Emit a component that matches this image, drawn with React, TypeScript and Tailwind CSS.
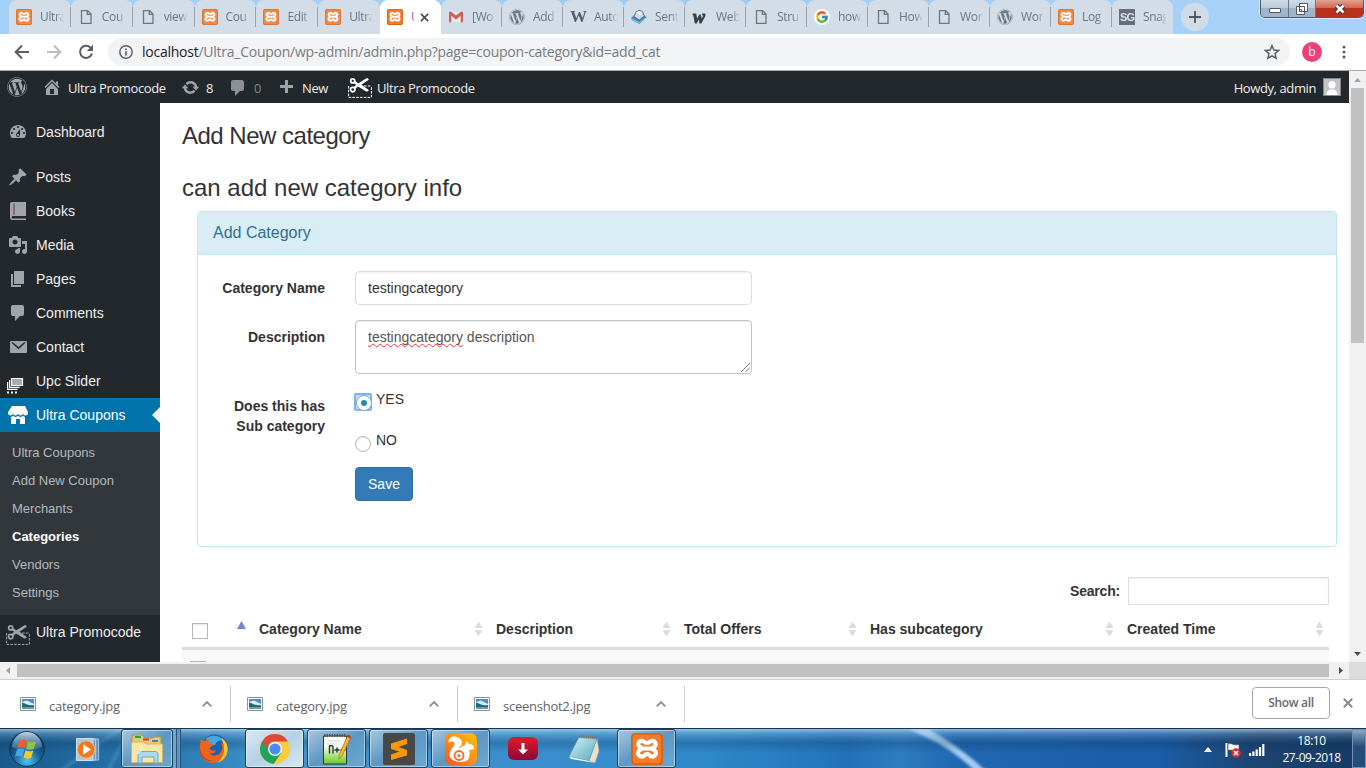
import React from "react";
import { FaWordpress } from "react-icons/fa";
import { FcGoogle } from "react-icons/fc";

const UI = "font-['Open_Sans','Noto_Sans',sans-serif]";

type P = { className?: string };

/* ---------- small drawings ---------- */

const Xampp = ({ className = "" }: P) => (
  <svg viewBox="0 0 32 32" className={className}>
    <rect width="32" height="32" rx="3.5" fill="#f47b2a" />
    <rect x="1" y="1" width="30" height="30" rx="3" fill="none" stroke="#c9570f" strokeWidth="1.2" />
    <g fill="none" stroke="#fff" strokeWidth="4.2" strokeLinecap="round" strokeLinejoin="round">
      <path d="M10.5 14.6a3.4 3.4 0 1 1 2.6-5.8c1.200 1.600 4.600 1.600 5.800 0a3.400 3.400 0 1 1 2.600 5.800" />
      <path d="M10.500 16.400a3.600 3.600 0 1 0 3 5.800c1-1.400 4-1.400 5 0a3.600 3.600 0 1 0 3-5.800" />
      <path d="M13 15.500h6" />
    </g>
  </svg>
);

const DocIcon = ({ className = "" }: P) => (
  <svg viewBox="0 0 16 16" className={className} fill="none" stroke="#5f6368" strokeWidth="1.300">
    <path d="M3.500 1.700h6.200l3.300 3.300v9.300H3.500zM9.300 1.700v3.700H13" />
  </svg>
);

const Gmail = () => (
  <svg viewBox="0 0 16 16" className="size-4">
    <path d="M2 3h12v10H2z" fill="#f1eff0" />
    <path d="M1 3.500v9.700h2.300V6.800L8 10.400l4.700-3.600v6.400H15V3.500c-.5-1.200-1.700-1.100-2.500-.5L8 6.600 3.500 3C2.700 2.400 1.500 2.300 1 3.500z" fill="#d04c43" />
  </svg>
);

const Cube = () => (
  <svg viewBox="0 0 16 16" className="size-4">
    <path d="M.3 8.500L3.500 6h9L15.700 8 8.500 15 .8 11z" fill="#2f7fb4" />
    <path d="M.8 9.500L8.300 13 15 8.500 8.500 14.800 1 11z" fill="#5fb8ea" />
    <path d="M2.800 7.500L5 3l3-2 3.500 1.500 1.800 4.500-5 4z" fill="#cdd8df" stroke="#39454d" strokeWidth=".8" />
    <path d="M5.500 3.500L8 2l3 1.300L8.500 6z" fill="#fff" />
  </svg>
);

const Glyph = ({ d, className = "size-5", box = 20 }: { d: string; className?: string; box?: number }) => (
  <svg viewBox={`0 0 ${box} ${box}`} className={`${className} shrink-0`} fill="currentColor">
    <path fillRule="evenodd" d={d} />
  </svg>
);

const D = {
  home: "M16 8.500l1.530 1.530-1.060 1.060L10 4.600l-6.470 6.490-1.060-1.060L10 2.500l4 4v-2h2v4zm-6-2.460l6 5.990V18H4v-5.970zM12 17v-5H8v5h4z",
  comment: "M5 2h9c1.100 0 2 .9 2 2v7c0 1.100-.9 2-2 2h-2l-5 5v-5H5c-1.100 0-2-.9-2-2V4c0-1.100.9-2 2-2z",
  plus: "M17 7v3h-5v5H9v-5H4V7h5V2h3v5h5z",
  update:
    "M10.200 3.280c3.530 0 6.430 2.610 6.920 6h2.080l-3.500 4-3.500-4h2.320c-.45-1.970-2.210-3.450-4.320-3.450-1.450 0-2.730.71-3.540 1.780L4.950 5.660C6.230 4.200 8.110 3.280 10.200 3.280zm-.4 13.440c-3.520 0-6.430-2.610-6.920-6H.8l3.500-4c1.170 1.330 2.330 2.670 3.500 4H5.480c.45 1.970 2.210 3.450 4.320 3.450 1.450 0 2.730-.71 3.540-1.780l1.710 1.950c-1.280 1.460-3.150 2.380-5.250 2.380z",
  dashboard:
    "M3.760 16h12.480c1.100-1.370 1.760-3.110 1.760-5 0-4.420-3.580-8-8-8s-8 3.580-8 8c0 1.890.66 3.630 1.760 5zM10 4c.55 0 1 .45 1 1s-.45 1-1 1-1-.45-1-1 .45-1 1-1zM6 6c.55 0 1 .45 1 1s-.45 1-1 1-1-.45-1-1 .45-1 1-1zm8 0c.55 0 1 .45 1 1s-.45 1-1 1-1-.45-1-1 .45-1 1-1zm-5.370 5.550L12 7v6c0 1.100-.9 2-2 2s-2-.9-2-2c0-.57.24-1.080.63-1.450zM4 10c.55 0 1 .45 1 1s-.45 1-1 1-1-.45-1-1 .45-1 1-1zm12 0c.55 0 1 .45 1 1s-.45 1-1 1-1-.45-1-1 .45-1 1-1zm-5 3c0-.55-.45-1-1-1s-1 .45-1 1 .45 1 1 1 1-.45 1-1z",
  pin: "M10.440 3.020l1.820-1.820 6.360 6.350-1.830 1.820c-1.050-.68-2.480-.57-3.410.36l-.75.75c-.92.93-1.040 2.350-.35 3.410l-1.830 1.820-2.410-2.410-2.800 2.790c-.42.42-3.380 2.710-3.800 2.290s1.860-3.390 2.280-3.810l2.790-2.790L4.100 9.360l1.830-1.820c1.050.69 2.480.57 3.400-.36l.75-.75c.93-.92 1.050-2.350.36-3.410z",
  media:
    "M13 11V4c0-.55-.45-1-1-1h-1.670L9 1H5L3.670 3H2c-.55 0-1 .45-1 1v7c0 .55.45 1 1 1h10c.55 0 1-.45 1-1zM7 4.500c1.380 0 2.500 1.120 2.500 2.500S8.380 9.500 7 9.500 4.500 8.380 4.500 7 5.620 4.500 7 4.500zM14 6h5v10.500c0 1.380-1.120 2.500-2.500 2.500S14 17.880 14 16.500s1.120-2.500 2.500-2.500c.17 0 .34.02.5.05V9h-3V6zm-4 8.050V13h2v3.500c0 1.380-1.120 2.500-2.500 2.500S7 17.880 7 16.500 8.120 14 9.500 14c.17 0 .34.02.5.05z",
  page: "M6 15V2h10v13H6zm-1 1h8v2H3V5h2v11z",
  store:
    "M1 10c.41.29.96.43 1.500.43.55 0 1.090-.14 1.500-.43.62-.46 1-1.170 1-2 0 .83.37 1.540 1 2 .41.29.96.43 1.500.43.55 0 1.090-.14 1.500-.43.62-.46 1-1.170 1-2 0 .83.37 1.540 1 2 .41.29.96.43 1.510.43.54 0 1.080-.14 1.490-.43.62-.46 1-1.170 1-2 0 .83.37 1.540 1 2 .41.29.96.43 1.500.43.55 0 1.090-.14 1.500-.43.63-.46 1-1.170 1-2V7l-3-6H4L0 7v1c0 .83.37 1.540 1 2zm2 8.990h5v-5h4v5h5v-7c-.37-.05-.72-.22-1-.43-.63-.45-1-.73-1-1.560 0 .83-.38 1.110-1 1.560-.41.3-.95.43-1.490.44-.55 0-1.100-.14-1.510-.44-.63-.45-1-.73-1-1.560 0 .83-.38 1.110-1 1.560-.41.3-.95.43-1.500.44-.54 0-1.090-.14-1.500-.44-.63-.45-1-.73-1-1.570 0 .84-.38 1.120-1 1.570-.29.21-.63.38-1 .44v6.990z",
  mail: "M3 4h15a1 1 0 0 1 1 1v10a1 1 0 0 1-1 1H3a1 1 0 0 1-1-1V5a1 1 0 0 1 1-1zm.5 1.800l7 6.400 7-6.400-1-.9-6 5-6-5z",
};

const Book = () => (
  <svg viewBox="0 0 20 20" className="size-5 shrink-0">
    <path d="M4 1h14v14H4.500c-1 0-1 2.600 0 2.600H18V19H4.500A2.500 2.500 0 0 1 2 16.500V3a2 2 0 0 1 2-2z" fill="#a0a5aa" />
    <path d="M5.500 2.500h1.100v11H5.500z" fill="#7b2d7c" />
  </svg>
);

const Scissors = ({ className = "" }: P) => (
  <svg viewBox="0 0 24 20" className={`${className} shrink-0`} fill="none" stroke="currentColor">
    <circle cx="4.700" cy="2.900" r="2" strokeWidth="1.700" />
    <circle cx="4.700" cy="11.600" r="2.200" strokeWidth="1.700" />
    <path d="M6.500 4l3.500 2.800L6.500 10M9 7h3" strokeWidth="2.400" />
    <path d="M10 5.500L18.500.3c1.300-.3 2 .5 2.300 1.500L13.500 6.800l7.300 5.200c-.5 1.200-1.400 1.700-2.600 1.400L10 8.500z" fill="currentColor" stroke="none" />
    <path d="M.6 8v11.400h22.800V8.500M16 8h7.500" strokeWidth="1" strokeDasharray="2.600 1.200" />
  </svg>
);

const Slider = () => (
  <svg viewBox="0 0 20 20" className="size-5 shrink-0">
    <g fill="none" stroke="#fff" strokeWidth="1.200">
      <path d="M.6 7v7.400h10M2.600 5v7.400h10" />
    </g>
    <path d="M4.500 3.500h11v7h-11z" fill="#aaa" stroke="#fff" strokeWidth="1.200" />
    <path d="M0 16.500h2v2H0zM4 16.500h2v2H4zM8 16.500h2v2H8z" fill="#fff" />
  </svg>
);

/* ---------- browser chrome ---------- */

const xa = <Xampp className="size-4" />;
const doc = <DocIcon className="size-4" />;
const wp = <FaWordpress className="size-4 text-[#5b666e]" />;

const leftTabs: [React.ReactNode, string][] = [
  [xa, "Ultra"], [doc, "Cou"], [doc, "view"], [xa, "Cou"], [xa, "Edit"], [xa, "Ultra"],
];
const rightTabs: [React.ReactNode, string][] = [
  [<Gmail />, "[Wo"],
  [wp, "Add"],
  [<span className="block font-['Liberation_Serif',serif] text-[17px] font-bold leading-4 text-[#3e464c]">W</span>, "Auto"],
  [<Cube />, "Sent"],
  [<span className="block pl-px font-['Liberation_Serif',serif] text-[18px] font-black italic leading-4 text-[#1c242b] [-webkit-text-stroke:1px_#1c242b]">w</span>, "Web"],
  [doc, "Stru"],
  [<span className="grid size-4 place-items-center rounded-full bg-white"><FcGoogle className="size-3.5" /></span>, "how"],
  [doc, "How"],
  [doc, "Wor"],
  [wp, "Wor"],
  [xa, "Log"],
  [<span className="block size-4 bg-[#555868] text-center font-['Liberation_Sans',sans-serif] text-[11px] font-bold leading-4 tracking-[-0.8px] text-[#d4e7ee]">SG</span>, "Snag"],
];

const Tab = ({ icon, text, side, last }: { icon: React.ReactNode; text: string; side: "l" | "r"; last?: boolean }) => (
  <div className={`flex h-[34px] items-center rounded-t-[8px] bg-[#d3dde8] ${side === "l" ? "w-[61.85px]" : "w-[61px]"}`}>
    <div className={`flex h-5 flex-1 items-center pl-[7px] ${last ? "" : "border-r border-[#98a2ac]"}`}>
      <span className="w-4 shrink-0 opacity-85">{icon}</span>
      <span className="ml-2 w-[24px] overflow-hidden whitespace-nowrap text-[12px] leading-5 tracking-[-0.35px] text-[#6d747c] [mask-image:linear-gradient(to_right,black_65%,transparent)]">{text}</span>
    </div>
  </div>
);

const WindowControls = () => (
  <div className="absolute right-[2px] top-0 flex h-[18px] overflow-hidden rounded-b-[5px] border border-t-0 border-[#4c5a69] shadow-[0_0_1px_1px_rgba(255,255,255,.5)]">
    <div className="grid w-[28px] place-items-center border-r border-[#66788a] bg-linear-to-b from-[#d0dce8] via-[#bccbda] via-45% to-[#9fb5ca] to-50%">
      <div className="mt-1 h-[5px] w-[12px] rounded-[1px] border border-[#535666] bg-white" />
    </div>
    <div className="grid w-[27px] place-items-center border-r border-[#66788a] bg-linear-to-b from-[#d0dce8] via-[#bccbda] via-45% to-[#9fb5ca] to-50%">
      <svg viewBox="0 0 12 12" className="size-3" fill="#fff" stroke="#535666">
        <path d="M3.500.5h8v8h-8zM.5 3.500h8v8h-8zM3.500 6.500h2v2h-2z" />
      </svg>
    </div>
    <div className="grid w-[47px] place-items-center bg-linear-to-b from-[#e2a191] via-[#cf6a52] via-45% to-[#b8311a] to-50%">
      <svg viewBox="0 0 12 12" className="size-3">
        <path d="M2.500 2.500l7 7M9.500 2.500l-7 7" stroke="#4b2f38" strokeWidth="4.600" />
        <path d="M2.500 2.500l7 7M9.500 2.500l-7 7" stroke="#fff" strokeWidth="2.600" />
      </svg>
    </div>
  </div>
);

const TabStrip = () => (
  <div className={`${UI} relative flex h-[34px] shrink-0 bg-linear-to-r from-[#a3d1f8] via-[#9dcbf0] to-[#a9d2fa] pl-[9px]`}>
    {leftTabs.map(([i, t], k) => <Tab key={k} icon={i} text={t} side="l" last={k === 5} />)}
    <div className="flex w-[61px] items-center rounded-t-[8px] bg-white pl-[7px]">
      <Xampp className="size-4 shrink-0" />
      <span className="ml-2 w-[3px] overflow-hidden text-[12px] text-[#a855a0]">U</span>
      <svg viewBox="0 0 10 10" className="ml-[6px] size-[9px]"><path d="M1 1l8 8M9 1L1 9" stroke="#45494d" strokeWidth="1.700" /></svg>
    </div>
    {rightTabs.map(([i, t], k) => <Tab key={k} icon={i} text={t} side="r" last={k === 11} />)}
    <div className="ml-2 mt-[3px] grid size-7 place-items-center rounded-full bg-[#cfdce8]">
      <svg viewBox="0 0 12 12" className="size-3"><path d="M6 0v12M0 6h12" stroke="#50565c" strokeWidth="1.800" /></svg>
    </div>
    <WindowControls />
  </div>
);

const Toolbar = () => (
  <div className={`${UI} flex h-[37px] shrink-0 items-center border-b border-[#a9aaab] bg-white pl-[14px]`}>
    <svg viewBox="0 0 16 16" className="size-4" fill="none" stroke="#5a5e63" strokeWidth="2"><path d="M15 8H2M8 1.500L1.700 8 8 14.500" /></svg>
    <svg viewBox="0 0 16 16" className="ml-4 size-4" fill="none" stroke="#bbbdbf" strokeWidth="2"><path d="M1 8h13M8 1.500L14.300 8 8 14.500" /></svg>
    <svg viewBox="0 0 16 16" className="ml-4 size-4"><path d="M13.300 4.500A6.100 6.100 0 1 0 14 9.500" fill="none" stroke="#5a5e63" strokeWidth="2" /><path d="M15 .8v6.200H8.800z" fill="#5a5e63" /></svg>
    <div className="ml-[14px] flex h-7 w-[1182px] items-center rounded-full bg-[#f1f3f4] pl-[11px] pr-[10px]">
      <svg viewBox="0 0 14 14" className="size-[14px]" fill="none" stroke="#5a5e63" strokeWidth="1.400"><circle cx="7" cy="7" r="6.200" /><path d="M7 6.200v4.200M7 3.600v1.400" strokeWidth="1.600" /></svg>
      <span className="ml-[9px] flex-1 whitespace-nowrap text-[14px] leading-5 tracking-[-0.25px] text-[#777c81]">
        <span className="text-[#202124]">localhost</span>/Ultra_Coupon/wp-admin/admin.php?page=coupon-category&amp;id=add_cat
      </span>
      <svg viewBox="0 0 16 16" className="size-4" fill="none" stroke="#5a5e63" strokeWidth="1.500"><path d="M8 1.800l1.900 4.300 4.700.4-3.600 3.100 1.100 4.600L8 11.800l-4.100 2.400L5 9.600 1.400 6.500l4.700-.4z" /></svg>
    </div>
    <div className="ml-3 grid size-5 place-items-center rounded-full bg-[#ec407a] text-[12px] leading-none text-white">b</div>
    <svg viewBox="0 0 4 14" className="ml-[20px] h-[14px] w-1" fill="#5a5e63"><circle cx="2" cy="2" r="1.500" /><circle cx="2" cy="7" r="1.500" /><circle cx="2" cy="12" r="1.500" /></svg>
  </div>
);

/* ---------- WordPress admin ---------- */

const AdminBar = () => (
  <div className={`${UI} flex h-8 shrink-0 items-center bg-[#23282d] text-[13px] leading-5 tracking-[-0.38px] text-[#eee]`}>
    <FaWordpress className="ml-[7px] size-5 text-[#a0a5aa]" />
    <Glyph d={D.home} className="ml-[15px] size-5 text-[#a0a5aa]" />
    <span className="ml-[6px] w-[113px] whitespace-nowrap pt-0.5">Ultra Promocode</span>
    <Glyph d={D.update} className="size-[19px] text-[#a0a5aa]" />
    <span className="ml-[6px] w-[22px] pt-0.5">8</span>
    <Glyph d={D.comment} className="mt-px size-5 text-[#8b9095]" />
    <span className="ml-[6px] w-[22px] pt-0.5 text-[#82878c]">0</span>
    <Glyph d={D.plus} className="mt-0.5 size-5 text-[#a0a5aa]" />
    <span className="ml-[6px] w-[46px] pt-0.5">New</span>
    <Scissors className="mt-0.5 h-5 w-6 text-white" />
    <span className="ml-[5px] flex-1 pt-0.5">Ultra Promocode</span>
    <span className="pt-0.5 tracking-[-0.4px]">Howdy, admin</span>
    <span className="ml-[7px] mr-2 grid size-[18px] place-items-center border border-[#82878c] bg-[#c5c5c5]">
      <svg viewBox="0 0 16 16" className="size-4" fill="#fff"><circle cx="8" cy="5.800" r="3.600" /><path d="M2.500 16c0-4 2.500-5 4-5.500h3c1.500.5 4 1.500 4 5.500z" /></svg>
    </span>
  </div>
);

const Item = ({ icon, label, active }: { icon: React.ReactNode; label: string; active?: boolean }) => (
  <div className={`flex h-[34px] items-center pl-2 text-[14px] ${active ? "bg-[#0073aa] text-white" : "text-[#eee]"}`}>
    <span className={`w-[28px] ${active ? "text-white" : "text-[#a0a5aa]"}`}>{icon}</span>
    <span className="flex-1 whitespace-nowrap">{label}</span>
    {active && <span className="border-8 border-transparent border-r-[#f1f1f1]" />}
  </div>
);

const Sidebar = () => (
  <div className="w-40 shrink-0 overflow-hidden bg-[#23282d] pt-3 font-['Liberation_Sans',sans-serif]">
    <Item icon={<Glyph d={D.dashboard} />} label="Dashboard" />
    <div className="h-[11px]" />
    <Item icon={<Glyph d={D.pin} />} label="Posts" />
    <Item icon={<Book />} label="Books" />
    <Item icon={<Glyph d={D.media} />} label="Media" />
    <Item icon={<Glyph d={D.page} />} label="Pages" />
    <Item icon={<Glyph d={D.comment} />} label="Comments" />
    <Item icon={<Glyph d={D.mail} />} label="Contact" />
    <Item icon={<div className="-ml-px pt-2"><Slider /></div>} label="Upc Slider" />
    <Item icon={<Glyph d={D.store} />} label="Ultra Coupons" active />
    <div className="h-[183px] bg-[#32373c] pl-3 pt-[7px] text-[13px] leading-[28px] text-[#b4b9be]">
      <div>Ultra Coupons</div>
      <div>Add New Coupon</div>
      <div>Merchants</div>
      <div className="font-bold text-white">Categories</div>
      <div>Vendors</div>
      <div>Settings</div>
    </div>
    <Item icon={<div className="-ml-[2px] pt-[5px]"><Scissors className="h-5 w-6" /></div>} label="Ultra Promocode" />
  </div>
);

const SortBoth = () => (
  <svg viewBox="0 0 9 16" className="h-4 w-[9px]" fill="#dcdcdc"><path d="M4.500 0.500L8.500 7H.5zM4.500 15.500L8.500 9H.5z" /></svg>
);

const Th = ({ label, w }: { label: string; w: string }) => (
  <div className={`flex items-center justify-between pt-0.5 ${w}`}>
    <span>{label}</span>
    <SortBoth />
  </div>
);

const CategoryPanel = () => (
  <div className="mx-[15px] h-[336px] w-[1140px] rounded-[4px] border border-[#bce8f1]">
    <div className="h-[43px] border-b border-[#bce8f1] bg-[#d9edf7] pl-[15px] text-[16px] leading-[42px] text-[#31708f]">Add Category</div>
    <div className="grid grid-cols-[127px_397px] gap-x-[30px] pt-4">
      <label className="text-right font-bold leading-[34px]">Category Name</label>
      <div className="h-[34px] rounded-[4px] border border-[#ddd] pl-3 leading-8 shadow-[inset_0_1px_2px_rgba(0,0,0,.07)]">testingcategory</div>

      <label className="pt-[15px] text-right font-bold leading-[34px]">Description</label>
      <div className="mt-[15px] flex h-[54px] items-end justify-between rounded-[4px] border border-[#c4c4c4] pl-3 text-[#555] shadow-[inset_0_1px_1px_rgba(0,0,0,.075)]">
        <div className="self-start leading-8">
          <span className="underline decoration-[#e33] decoration-wavy decoration-[0.500px] underline-offset-[1px] [text-decoration-skip-ink:none]">testingcategory</span> description
        </div>
        <svg viewBox="0 0 10 10" className="m-px size-[9px]" stroke="#666" strokeWidth="1"><path d="M0 10L10 0M5 10l5-5" /></svg>
      </div>

      <div className="pt-[22px] text-right font-bold leading-5">Does this has<br />Sub category</div>
      <div className="pt-[15px]">
        <div className="flex h-[41px] gap-1">
          <span className="-ml-px mt-1 grid size-[18px] place-items-center rounded-[2px] border-2 border-[#7fb0f5] bg-[#c9defa]">
            <span className="grid size-4 place-items-center rounded-full border border-[#88a8cc] bg-white"><span className="size-1.5 rounded-full bg-[#1e8cbe]" /></span>
          </span>
          <span className="leading-5">YES</span>
        </div>
        <div className="flex h-[37px] gap-[5px]">
          <span className="mt-[6px] size-4 rounded-full border border-[#b4b9be] shadow-[inset_0_1px_2px_rgba(0,0,0,.1)]" />
          <span className="leading-5">NO</span>
        </div>
        <div className="h-[34px] w-[58px] rounded-[4px] border border-[#2e6da4] bg-[#337ab7] text-center leading-8 text-white">Save</div>
      </div>
    </div>
  </div>
);

const Main = () => (
  <div className="flex-1 overflow-hidden bg-white pl-[22px] font-['Liberation_Sans',sans-serif] text-[14px] text-[#333]">
    <h1 className="pt-[19px] text-[24px] leading-[28px] tracking-[-0.5px]">Add New category</h1>
    <h1 className="pb-[9px] pt-6 text-[24px] leading-[28px]">can add new category info</h1>
    <CategoryPanel />
    <div className="mr-5 mt-[30px] flex h-7 items-center justify-end font-bold">
      <span className="tracking-[-0.2px]">Search:</span>
      <div className="ml-2 h-7 w-[201px] border border-[#ddd] shadow-[inset_0_1px_2px_rgba(0,0,0,.07)]" />
    </div>
    <div className="mr-5 mt-1 flex h-[41px] items-center border-b-3 border-[#ddd] pl-[10px] font-bold">
      <span className="mt-[6px] size-4 border border-[#b4b9be] shadow-[inset_0_1px_2px_rgba(0,0,0,.1)]" />
      <svg viewBox="0 0 9 8" className="-mt-[6px] ml-[29px] mr-[13px] h-2 w-[9px]" fill="#7d7ddb"><path d="M4.500 0L9 8H0z" /></svg>
      <div className="flex gap-[13px]">
        <Th label="Category Name" w="w-[224px]" />
        <Th label="Description" w="w-[175px]" />
        <Th label="Total Offers" w="w-[173px]" />
        <Th label="Has subcategory" w="w-[244px]" />
        <Th label="Created Time" w="w-[197px]" />
      </div>
    </div>
    <div className="mr-5 h-3 bg-[#f9f9f9] pl-2 pt-[11px]"><div className="h-4 w-4 border border-[#b4b9be]" /></div>
  </div>
);

const Arrow = ({ d, c }: { d: string; c: string }) => (
  <svg viewBox="0 0 17 17" className="size-[17px] shrink-0" fill={c}><path d={d} /></svg>
);

const VScroll = () => (
  <div className="flex w-[17px] shrink-0 flex-col items-center justify-between bg-[#f1f1f1]">
    <div>
      <Arrow d="M5 11h7L8.500 7z" c="#a3a3a3" />
      <div className="mx-auto h-[255px] w-[13px] bg-[#c1c1c1]" />
    </div>
    <Arrow d="M5 7h7L8.500 11z" c="#505050" />
  </div>
);

const HScroll = () => (
  <div className="flex h-[17px] shrink-0 items-center bg-[#f1f1f1]">
    <Arrow d="M10 5v7L6 8.500z" c="#a3a3a3" />
    <div className="h-[13px] w-[1312px] bg-[#c1c1c1]" />
    <div className="ml-auto"><Arrow d="M7 5v7l4-3.500z" c="#505050" /></div>
    <div className="h-full w-[17px] bg-[#dcdcdc]" />
  </div>
);

/* ---------- download shelf ---------- */

const Download = ({ name }: { name: string }) => (
  <div className="flex h-9 w-[227px] items-center border-r border-[#ccc] pl-[16px] pr-[18px]">
    <svg viewBox="0 0 16 14" className="h-[14px] w-4">
      <path d="M.5.5h15v13H.5z" fill="#fff" stroke="#909090" />
      <path d="M2 2h12v5H2z" fill="#4f8fc9" /><path d="M2 5l5-1.500L14 7v2H2z" fill="#dcecf5" /><path d="M2 5.500c4 1 6 3.500 12 2.500v4H2z" fill="#256a68" /><path d="M2 10h12v2H2z" fill="#5c9fc4" />
    </svg>
    <span className="ml-[13px] flex-1 pt-[5px] text-[13px] tracking-[-0.25px] text-[#5f6368]">{name}</span>
    <svg viewBox="0 0 10 6" className="h-[6px] w-[10px]" fill="none" stroke="#8c8f93" strokeWidth="1.800"><path d="M.7 5.300L5 1l4.300 4.300" /></svg>
  </div>
);

const Shelf = () => (
  <div className={`${UI} flex h-[49px] shrink-0 items-center border-t border-[#d0d0d0] bg-white pl-[4px]`}>
    <Download name="category.jpg" />
    <Download name="category.jpg" />
    <Download name="sceenshot2.jpg" />
    <div className="-mt-0.5 ml-auto grid h-8 w-[78px] place-items-center rounded-[4px] border border-[#a5a7aa] text-[12px] font-semibold tracking-[-0.3px] text-[#666a6f]">Show all</div>
    <svg viewBox="0 0 10 10" className="-mt-0.5 ml-[13px] mr-[13px] size-[10px]"><path d="M.8.8l8.400 8.400M9.200.8L.8 9.200" stroke="#888b8f" strokeWidth="2" /></svg>
  </div>
);

/* ---------- taskbar ---------- */

const Orb = () => (
  <svg viewBox="0 0 36 36" className="size-9">
    <defs>
      <radialGradient id="orb" cx=".5" cy=".85" r=".8"><stop offset="0" stopColor="#49c7f0" /><stop offset=".5" stopColor="#1b5f97" /><stop offset="1" stopColor="#0b2e52" /></radialGradient>
      <linearGradient id="orbTop" x2="0" y2="1"><stop offset="0" stopColor="#d8eaf6" stopOpacity=".9" /><stop offset="1" stopColor="#7fb0d2" stopOpacity=".25" /></linearGradient>
    </defs>
    <circle cx="18" cy="18" r="17.300" fill="url(#orb)" stroke="#0d3557" />
    <path d="M3 16a15 15 0 0 1 30 0c-7 4-22 4-30 0z" fill="url(#orbTop)" />
    <path d="M10.500 9.500c3-1.800 5.200-1.300 7.300 0l-2 7.500c-2.200-1.400-4.500-1.600-7.300 0z" fill="#f0612a" />
    <path d="M19 10.200c2.600 1.300 5 1.400 8 0l-2.200 7.500c-2.800 1.300-5.200 1.300-7.700-.1z" fill="#8fc43f" />
    <path d="M8 18.600c2.800-1.600 5-1.300 7.200 0l-2 7.200c-2.200-1.400-4.500-1.500-7.200 0z" fill="#4fa3e0" />
    <path d="M16.600 19.300c2.600 1.400 5 1.400 7.700.1l-2.100 7.300c-2.800 1.300-5.200 1.300-7.700-.1z" fill="#fbc72e" />
  </svg>
);

const MediaPlayer = () => (
  <svg viewBox="0 0 28 26" className="h-[25px] w-7">
    <path d="M7 2h17v22H7z" fill="#5b93c0" stroke="#9fc6e2" /><path d="M4 2h17v22H4z" fill="#6ca3cd" stroke="#b5d5eb" /><path d="M1 1.500h17v23H1z" fill="#a9cbe4" stroke="#d0e4f1" />
    <circle cx="11" cy="13" r="9" fill="#f07a1b" stroke="#f9b06b" /><path d="M8 7.500v11l8-5.500z" fill="#fff" />
  </svg>
);

const Explorer = () => (
  <svg viewBox="0 0 34 30" className="h-[30px] w-[34px]">
    <path d="M2 3l1-2h10l1 3h9l1-1h7v25H2z" fill="#e4c878" stroke="#b8963f" />
    <path d="M5 2h6v2H5z" fill="#2da03c" /><path d="M13 4.500h6v2h-6z" fill="#d04030" /><path d="M22 6h6v2h-6z" fill="#3b86d0" />
    <path d="M1.500 8h12l2 2h17v18.500h-31z" fill="#f7e6a6" stroke="#d3b65f" />
    <path d="M8 29v-9c0-1.500 1-2.500 2.500-2.500h15c1.500 0 2.500 1 2.500 2.500v9h-4v-6H12v6z" fill="#a9d8f0" stroke="#6ba8ce" />
    <path d="M12 11l-1 6-4 3" stroke="#fff" fill="none" />
  </svg>
);

const Firefox = () => (
  <svg viewBox="0 0 32 32" className="size-[31px]">
    <circle cx="17" cy="15" r="13.500" fill="#1f5fae" /><path d="M8 6c4-4 14-5 19 2-4-1-8 0-9 4l-6 2z" fill="#3fa9e0" />
    <path d="M3 6c1 1.500 2.500 2 4.500 2C10 5.500 12 6 12 6c-1 1.200-1.500 2.500-1 4 2 .2 4 .8 5 1.800-1 2-3.500 2-4 4 1 2.500 4 3 7 2-1 3-5 4-7 3.500 5 4.500 13 1 13-6 0-3-1-5-2-6 3 1.500 4 3.500 4.500 5.500.3-4-1-7.500-4-10C29 8 31 12 30.500 17 30 25.500 24 31 16 31 7.500 31 1.500 24.500 1.500 16.500 1.500 12.500 3 10 3 6z" fill="#e8651b" />
    <path d="M24 5c5 3.500 7 8 6.500 12.500C30 24 26 29 20 30.500c6-4.500 8-10 6.500-18z" fill="#fbc531" /><path d="M2 14c0 8 5 14 13 15-7 1-13.500-5-13.500-12z" fill="#c43a17" />
  </svg>
);

const Chrome = () => (
  <svg viewBox="0 0 30 30" className="size-[30px]">
    <circle cx="15" cy="15" r="15" fill="#fbcd3a" />
    <path d="M15 15L2 7.500A15 15 0 0 0 13.500 29.900L21.500 18.700z" fill="#21a35a" />
    <path d="M2 7.500l6.500 11.200L15 15z" fill="#21a35a" />
    <path d="M2 7.500A15 15 0 0 1 28 7.500H15c-3.500 0-6 2-7 4.800L8 15z" fill="#dc4a3d" />
    <circle cx="15" cy="15" r="7" fill="#f3f6fb" /><circle cx="15" cy="15" r="5.600" fill="#4c8bf5" />
  </svg>
);

const Npp = () => (
  <svg viewBox="0 0 30 32" className="h-8 w-[30px]">
    <defs><linearGradient id="npp" x2="0" y2="1"><stop offset=".35" stopColor="#fafcf5" /><stop offset="1" stopColor="#67cb24" /></linearGradient></defs>
    <path d="M1.500 3h23v28h-23z" fill="url(#npp)" stroke="#2b3a2b" /><path d="M2 2.500h22" stroke="#555" strokeWidth="3" strokeDasharray="1.500 1" />
    <path d="M5 8h13M5 11h10" stroke="#bdd" />
    <path d="M7.500 20.500v-8M7.500 12.700h2.500l1 1v6.800M12.500 17h5M15 14.500v5M18.500 17h5M21 14.500v5" stroke="#333" fill="none" strokeWidth="1.400" />
    <path d="M26 2l3 1.500-9 20-3 2.500v-4z" fill="#f5b829" stroke="#a8751c" strokeWidth=".7" /><path d="M26 1.500l3 1.500-1 2.300-3-1.500z" fill="#b5383a" />
  </svg>
);

const Sublime = () => (
  <svg viewBox="0 0 32 32" className="size-8"><rect width="32" height="32" rx="2" fill="#484848" /><path d="M24 7v5.500l-8.500 3 8.500 3V24L8 28.500V23l8.500-3L8 17.500V12z" fill="#ff9800" transform="translate(0 -1.500)" /></svg>
);

const UC = () => (
  <svg viewBox="0 0 32 32" className="size-8">
    <defs><linearGradient id="uc" x1="1" x2="0" y2="1"><stop offset="0" stopColor="#ffc400" /><stop offset=".55" stopColor="#fd8a1c" /><stop offset="1" stopColor="#f9501f" /></linearGradient></defs>
    <rect width="32" height="32" rx="7" fill="url(#uc)" />
    <path d="M9 3.500c4 0 8 2.500 8 6.500 0 3-3 3.500-3 6 4-4 7-3 7.500-8l2 2.500c3.500.5 5.500 2.500 5.500 5-1.500 1.500-4 1.500-5 1.500 1 3 1 6-.5 9-2 3-8 3.500-12 2.500C5 27 3 22 6 17c1.500-2.500 3.500-4 3.500-6.500S7 8 3.500 9.500C3.500 6 5.500 3.500 9 3.500z" fill="#fff" />
    <circle cx="14" cy="22.500" r="4.500" fill="none" stroke="#fb6b20" strokeWidth="1.800" /><circle cx="14" cy="22.500" r="1.500" fill="#fb6b20" />
  </svg>
);

const RedDown = () => (
  <svg viewBox="0 0 30 24" className="h-6 w-[30px]"><defs><linearGradient id="rd" x2="0" y2="1"><stop stopColor="#dd1c2b" /><stop offset="1" stopColor="#8f0836" /></linearGradient></defs><rect width="30" height="23" rx="6" fill="url(#rd)" /><path d="M13.500 6h3v6.500h3.500l-5 5-5-5h3.500z" fill="#fff" /></svg>
);

const Notepad = () => (
  <svg viewBox="0 0 32 30" className="h-[30px] w-8">
    <defs><linearGradient id="np" x2="1" y2="1"><stop stopColor="#d6f1f7" /><stop offset="1" stopColor="#58a9bd" /></linearGradient></defs>
    <path d="M29 4l2 13-4 12-8-3z" fill="#e8e2cc" stroke="#a39a7c" strokeWidth=".6" /><path d="M11 3l18 1.500L21 27 1 22.500z" fill="url(#np)" stroke="#4b95aa" strokeWidth=".7" />
    <path d="M1 22.500L21 27l6 2L3 25z" fill="#f7f3e3" /><path d="M11 2.500l18 1.500" stroke="#777" strokeWidth="3" strokeDasharray="1.200 1" />
  </svg>
);

const TaskBtn = ({ children, bright, w = "w-[59px]" }: { children: React.ReactNode; bright?: boolean; w?: string }) => (
  <div className={`grid h-[39px] shrink-0 place-items-center rounded-[3px] border border-[#1c4163] shadow-[inset_0_0_0_1px_rgba(255,255,255,.45)] ${w} ${bright ? "bg-linear-to-br from-[#dbe9f4] via-[#b5d0e5] to-[#d8e9f5]" : "bg-linear-to-br from-[#a6c7de] via-[#5d98c3] to-[#67a9d4]"}`}>{children}</div>
);

const Taskbar = () => (
  <div className={`${UI} relative flex h-10 shrink-0 items-center overflow-hidden border-t border-[#17344e] bg-[#2b78b8]`}>
    <svg viewBox="0 0 1366 40" className="absolute inset-0 h-10 w-[1366px]" preserveAspectRatio="none">
      <defs>
        <linearGradient id="tb" x2="1"><stop offset="0" stopColor="#195b8c" /><stop offset=".13" stopColor="#2b7bb4" /><stop offset=".2" stopColor="#4294cc" /><stop offset=".45" stopColor="#378ccd" /><stop offset=".52" stopColor="#2f88c8" /><stop offset=".62" stopColor="#2372b8" /><stop offset=".66" stopColor="#2e7cc0" /><stop offset=".7" stopColor="#1f68b0" /><stop offset=".85" stopColor="#1b5ca6" /><stop offset=".92" stopColor="#1d4472" /><stop offset="1" stopColor="#143963" /></linearGradient>
        <linearGradient id="sh" x2="0" y2="1"><stop stopColor="#cfe6f5" stopOpacity=".65" /><stop offset=".12" stopColor="#9cc4de" stopOpacity=".3" /><stop offset=".35" stopColor="#0a2a50" stopOpacity=".22" /><stop offset=".6" stopColor="#0a2a50" stopOpacity="0" /></linearGradient>
        <filter id="soft"><feGaussianBlur stdDeviation="1.800" /></filter>
      </defs>
      <rect width="1366" height="40" fill="url(#tb)" />
      <path d="M908 0h20c22 12 42 27 58 42h-11c-18-18-38-30-67-42z" fill="#a5cdf0" filter="url(#soft)" />
      <path d="M108 42l20-40M60 42L120 0" stroke="#4d98c4" strokeWidth="3" filter="url(#soft)" opacity=".6" />
      <rect width="1366" height="40" fill="url(#sh)" />
    </svg>
    <div className="relative flex w-full items-center">
      <div className="ml-[9px] w-[66px] shrink-0"><Orb /></div>
      <div className="w-[46px] shrink-0 pt-0.5"><MediaPlayer /></div>
      <TaskBtn w="w-[52px]"><Explorer /></TaskBtn>
      <div className="h-[39px] w-1 shrink-0 border-r border-[#2a5578] bg-[#6ea6cd]" />
      <div className="h-[39px] w-1 shrink-0 border-r border-[#2a5578] bg-[#5c97c2]" />
      <div className="ml-[17px] w-[47px] shrink-0"><Firefox /></div>
      <div className="flex shrink-0 gap-[3px]">
        <TaskBtn bright><Chrome /></TaskBtn>
        <TaskBtn><Npp /></TaskBtn>
        <TaskBtn><Sublime /></TaskBtn>
        <TaskBtn><UC /></TaskBtn>
      </div>
      <div className="ml-[18px] w-[60px] shrink-0"><RedDown /></div>
      <div className="w-[49px] shrink-0"><Notepad /></div>
      <TaskBtn><Xampp className="size-8" /></TaskBtn>
      <svg viewBox="0 0 8 5" className="ml-auto mt-0.5 h-[5px] w-2"><path d="M0 5h8L4 0z" fill="#fff" /></svg>
      <svg viewBox="0 0 17 16" className="ml-[13px] mt-0.5 h-4 w-[17px]">
        <path d="M1.500 1v14" stroke="#fff" strokeWidth="2" /><path d="M3 2c4-1.500 5 2 11 .5v6C9 10 7 7 3 8.500z" fill="#fff" stroke="#30475e" strokeWidth=".6" />
        <circle cx="11" cy="11" r="4.700" fill="#d3312b" /><path d="M9 9l4 4M13 9l-4 4" stroke="#fff" strokeWidth="1.500" />
      </svg>
      <svg viewBox="0 0 16 12" className="ml-[7px] mt-0.5 h-3 w-4" fill="#fff"><path d="M0 9h2.200v3H0zM3.300 7.500h2.200V12H3.300zM6.600 5.500h2.200V12H6.600zM9.900 3h2.200v9H9.900zM13.200 0h2.200v12h-2.200z" /></svg>
      <div className="w-[93px] text-center text-[12px] leading-[17px] tracking-[-0.45px] text-white"><div>18:10</div><div>27-09-2018</div></div>
      <div className="ml-[-6px] h-[39px] w-[14px] border border-[#7292b0] bg-linear-to-b from-[#8fa9c1] to-[#244d78] to-45%" />
    </div>
  </div>
);

export default function App() {
  return (
    <div className="flex h-[768px] w-[1366px] flex-col overflow-hidden bg-white">
      <TabStrip />
      <Toolbar />
      <div className="flex h-[591px] shrink-0">
        <div className="flex min-w-0 flex-1 flex-col">
          <AdminBar />
          <div className="flex min-h-0 flex-1">
            <Sidebar />
            <Main />
          </div>
        </div>
        <VScroll />
      </div>
      <HScroll />
      <Shelf />
      <Taskbar />
    </div>
  );
}
